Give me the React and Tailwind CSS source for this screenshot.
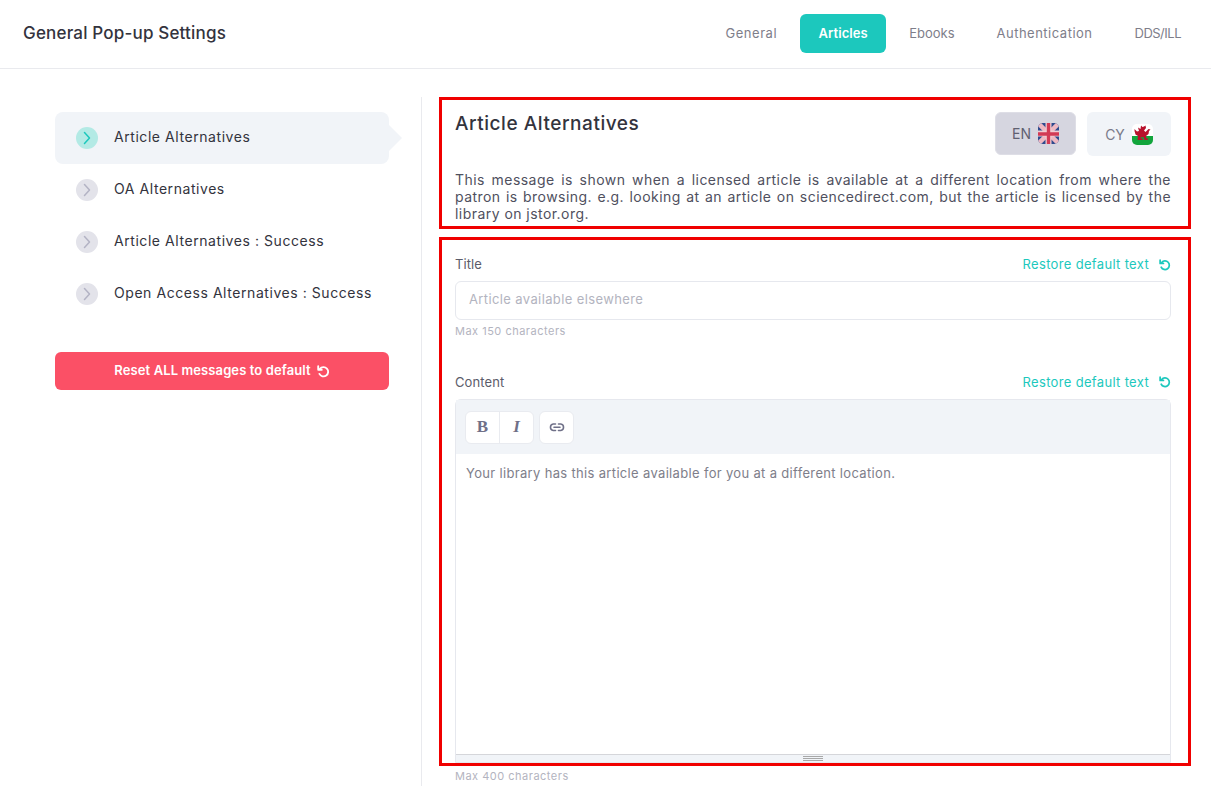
import React from "react";

const font = { fontFamily: "Inter, 'Open Sans', sans-serif" };

function Chevron({ active }) {
  return (
    <span className={`flex h-[22px] w-[22px] shrink-0 items-center justify-center rounded-full ${active ? "bg-[#b3eae5]" : "bg-[#e3e3ea]"}`}>
      <svg width="8" height="14" viewBox="0 0 8 14" fill="none">
        <path d="M1.5 1.5 6.5 7l-5 5.5" stroke={active ? "#1cc8bd" : "#b3b3c4"} strokeWidth="1.5" strokeLinecap="round" strokeLinejoin="round" />
      </svg>
    </span>
  );
}

function Undo({ className, size = 13 }) {
  return (
    <svg className={className} width={size} height={size} viewBox="0 0 14 14" fill="none">
      <path d="M3.1 4.2A5 5 0 1 1 2.6 9.6" stroke="currentColor" strokeWidth="2" strokeLinecap="round" />
      <path d="M1.3 1.4v3.8h3.9" stroke="currentColor" strokeWidth="2" strokeLinecap="round" strokeLinejoin="round" />
    </svg>
  );
}

function UkFlag() {
  return (
    <svg width="21" height="21" viewBox="0 0 21 21" className="overflow-hidden rounded-[5px]">
      <rect width="21" height="21" fill="#2f4b8e" />
      <path d="M0 0 21 21M21 0 0 21" stroke="#eeb8c2" strokeWidth="4.5" />
      <path d="M10.5 0v21M0 10.5h21" stroke="#f0cdd3" strokeWidth="6" />
      <path d="M10.5 0v21M0 11h21" stroke="#d23a55" strokeWidth="3.4" />
    </svg>
  );
}

function WalesFlag() {
  return (
    <svg width="21" height="21" viewBox="0 0 21 21" className="overflow-hidden rounded-[5px]">
      <rect width="21" height="12" fill="#ffffff" />
      <rect y="12" width="21" height="9" fill="#12a53c" />
      <path d="M2.5 5 5 7.5 7 7 6 3.5 8.5 5 9 1.5l1.5 1.5 1.5-.5 1.500-1 .5 2.500-2 2.500 1.500 1.500 3-3 2 .5-1.500 1.500-.5 3-2.500 2 .5 2.500h2l-1 1.500h-3l-1-3-3 .5.5 1h2l-.5 1.500H5.500l.5-4-2.500-1.500-1-3.500z" fill="#b8112c" />
    </svg>
  );
}

function Restore() {
  return (
    <span className="flex items-center gap-[10px] text-[13px] tracking-[0.33px] text-[#1cc8bd]">
      Restore default text
      <Undo size={12} />
    </span>
  );
}

const tabs = [
  ["General", "tracking-[0.55px]"],
  ["Articles", "tracking-[0.1px]"],
  ["Ebooks", "tracking-[0px]"],
  ["Authentication", "tracking-[0.5px]"],
  ["DDS/ILL", "tracking-[-0.5px]"],
];
const items = ["Article Alternatives", "OA Alternatives", "Article Alternatives : Success", "Open Access Alternatives : Success"];

export default function App() {
  return (
    <div style={font} className="flex h-[786px] w-full flex-col overflow-hidden bg-white text-[#2f2f3a]">
      <header className="flex h-[69px] shrink-0 items-center justify-between border-b border-[#e9eaee] pl-[23px] pr-[9px]">
        <h1 className="text-[17px] font-medium tracking-[0.18px] text-[#33333d]">General Pop-up Settings</h1>
        <nav className="-mt-[1px] flex items-center text-[13px] text-[#7e7e8a]">
          {tabs.map(([t, tr]) => (
            <span
              key={t}
              className={
                t === "Articles"
                  ? `mx-[2px] flex h-[39px] w-[86px] items-center justify-center rounded-md bg-[#1cc8bd] font-semibold text-white ${tr}`
                  : `flex h-[39px] items-center justify-center px-[21px] ${tr}`
              }
            >
              {t}
            </span>
          ))}
        </nav>
      </header>

      <main className="flex min-h-0 flex-1 pt-[28px]">
        <aside className="w-[421px] shrink-0 pl-[55px] pt-[15px]">
          <div className="w-[334px]">
            {items.map((item, i) => (
              <div key={item} className={`relative flex h-[52px] items-center gap-[16px] rounded-lg pl-[21px] text-[14px] tracking-[0.56px] text-[#33333d] ${i === 0 ? "bg-[#f1f4f8]" : ""}`}>
                <Chevron active={i === 0} />
                <span className="pb-[3px]">{item}</span>
                {i === 0 && (
                  <span className="absolute left-full top-[13px] h-0 w-0 border-y-[13px] border-l-[13px] border-y-transparent border-l-[#f1f4f8]" />
                )}
              </div>
            ))}
            <button className="mt-[32px] flex h-[38px] w-full items-center justify-center gap-[6px] rounded-md bg-[#fb5066] text-[13px] font-semibold tracking-[0.1px] text-white">
              Reset ALL messages to default
              <Undo size={13} />
            </button>
          </div>
        </aside>

        <section className="flex min-h-0 flex-1 flex-col border-l border-[#e9eaee] pl-[17px]">
          <div className="h-[132px] w-[752px] shrink-0 border-[3px] border-[#f00000] px-[13px] pt-[12px]">
            <div className="flex items-start justify-between pr-[4px]">
              <h2 className="text-[19px] font-medium leading-[24px] tracking-[0.55px] text-[#33333d]">Article Alternatives</h2>
              <div className="flex gap-[11px]">
                <span className="flex h-[43px] w-[81px] items-center justify-center gap-[7px] rounded-md border border-[#dedee6] bg-[#d6d6e0] text-[14px] text-[#5f6070]">
                  EN <UkFlag />
                </span>
                <span className="flex h-[44px] w-[84px] items-center justify-center gap-[7px] rounded-md bg-[#f1f4f8] text-[14px] text-[#7a7b8a]">
                  CY <WalesFlag />
                </span>
              </div>
            </div>
            <p className="mt-[15px] pr-[4px] text-justify text-[14px] leading-[17px] tracking-[0.45px] text-[#4f505e]">
              This message is shown when a licensed article is available at a different location from where the patron is browsing. e.g. looking at an article on sciencedirect.com, but the article is licensed by the library on jstor.org.
            </p>
          </div>

          <div className="mt-[8px] flex h-[529px] w-[752px] shrink-0 flex-col border-[3px] border-[#f00000] px-[13px] pt-[15px]">
            <div className="flex items-center justify-between pr-[4px]">
              <label className="text-[13px] tracking-[0.1px] text-[#5b5c6a]">Title</label>
              <Restore />
            </div>
            <div className="mr-[4px] mt-[6px] flex h-[39px] items-center rounded-md border border-[#e6e8ee] px-[13px] text-[13px] tracking-[0.38px] text-[#b3b4c0]">
              Article available elsewhere
            </div>
            <p className="mt-[4px] text-[11px] leading-[14px] tracking-[0.5px] text-[#b3b4c0]">Max 150 characters</p>

            <div className="mt-[35px] flex items-center justify-between pr-[4px]">
              <label className="text-[13px] tracking-[0.1px] text-[#5b5c6a]">Content</label>
              <Restore />
            </div>
            <div className="mr-[4px] mt-[7px] flex min-h-0 flex-1 flex-col rounded-t-md border border-[#e6e8ee]">
              <div className="flex h-[54px] shrink-0 items-center gap-[5px] bg-[#f1f4f8] px-[9px]">
                <div className="flex h-[33px] overflow-hidden rounded-md border border-[#e9ebf0] bg-white text-[#6f7088]">
                  <span className="flex w-[34px] items-center justify-center border-r border-[#e9ebf0] font-['Liberation_Serif',serif] text-[17px] font-bold">B</span>
                  <span className="flex w-[33px] items-center justify-center font-['Liberation_Serif',serif] text-[17px] font-bold italic">I</span>
                </div>
                <span className="flex h-[33px] w-[35px] items-center justify-center rounded-md border border-[#e9ebf0] bg-white">
                  <svg width="16" height="9" viewBox="0 0 16 9" fill="none" stroke="#6f7088" strokeWidth="1.6" strokeLinecap="round">
                    <path d="M6.5 1H4.2a3.3 3.3 0 0 0 0 6.5h2.3M9.500 1h2.300a3.300 3.300 0 0 1 0 6.500H9.500M5 4.300h6" />
                  </svg>
                </span>
              </div>
              <div className="min-h-0 flex-1 px-[10px] pt-[10px] text-[13px] tracking-[0.33px] text-[#7e7e8a]">
                Your library has this article available for you at a different location.
              </div>
              <div className="flex h-[8px] shrink-0 flex-col items-center justify-center gap-[1px] border-t border-[#d5d6da] bg-[#f1f4f8]">
                <span className="h-px w-[20px] bg-[#a8a8a8]" />
                <span className="h-px w-[20px] bg-[#a8a8a8]" />
                <span className="h-px w-[20px] bg-[#a8a8a8]" />
              </div>
            </div>
          </div>
          <p className="ml-[16px] mt-[3px] text-[11px] leading-[14px] tracking-[0.5px] text-[#b3b4c0]">Max 400 characters</p>
        </section>
      </main>
    </div>
  );
}
